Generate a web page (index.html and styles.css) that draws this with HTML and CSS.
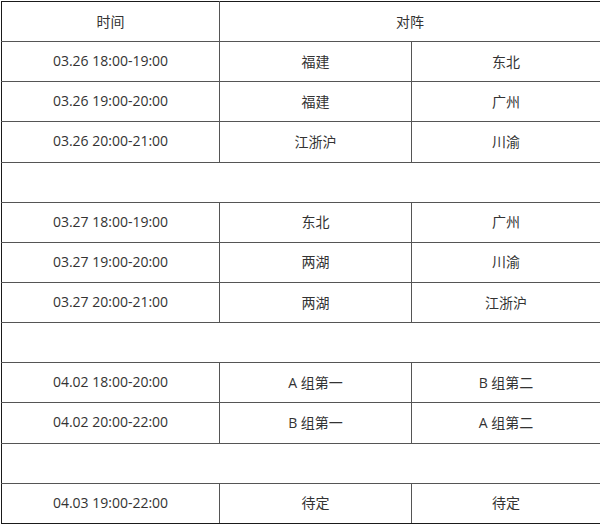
FILE: index.html
```html
<!DOCTYPE html>
<html lang="zh">
<head>
<meta charset="utf-8">
<link rel="stylesheet" href="styles.css">
</head>
<body>
<table class="schedule">
  <colgroup>
    <col class="c-time">
    <col class="c-team">
    <col class="c-team2">
  </colgroup>
  <tr><td>时间</td><td colspan="2">对阵</td></tr>
  <tr><td>03.26 18:00-19:00</td><td>福建</td><td>东北</td></tr>
  <tr><td>03.26 19:00-20:00</td><td>福建</td><td>广州</td></tr>
  <tr><td>03.26 20:00-21:00</td><td>江浙沪</td><td>川渝</td></tr>
  <tr class="gap"><td colspan="3"></td></tr>
  <tr><td>03.27 18:00-19:00</td><td>东北</td><td>广州</td></tr>
  <tr><td>03.27 19:00-20:00</td><td>两湖</td><td>川渝</td></tr>
  <tr><td>03.27 20:00-21:00</td><td>两湖</td><td>江浙沪</td></tr>
  <tr class="gap"><td colspan="3"></td></tr>
  <tr><td>04.02 18:00-20:00</td><td>A 组第一</td><td>B 组第二</td></tr>
  <tr><td>04.02 20:00-22:00</td><td>B 组第一</td><td>A 组第二</td></tr>
  <tr class="gap"><td colspan="3"></td></tr>
  <tr><td>04.03 19:00-22:00</td><td>待定</td><td>待定</td></tr>
</table>
</body>
</html>
```
FILE: styles.css
```css
html, body {
  margin: 0;
  padding: 0;
  background: #fff;
}
body {
  padding: 1px 0 0 1px;
}
.schedule {
  border-collapse: collapse;
  table-layout: fixed;
  width: 599px;
  height: 523px;
  border: 1px solid #1a1a1a;
  font-family: "Open Sans", "Noto Sans CJK SC", sans-serif;
  font-size: 14px;
  color: #333;
}
.c-time { width: 218px; }
.c-team { width: 192px; }
.c-team2 { width: 189px; }
.schedule td {
  border: 1px solid #555;
  text-align: center;
  vertical-align: middle;
  padding: 0 0 2px;
  height: 37px;
}
.schedule tr:first-child td { border-top-color: #1a1a1a; }
.schedule td:first-child { border-left-color: #1a1a1a; }
.schedule td:last-child { border-right-color: #1a1a1a; }
.schedule tr:last-child td { border-bottom-color: #1a1a1a; }
```
